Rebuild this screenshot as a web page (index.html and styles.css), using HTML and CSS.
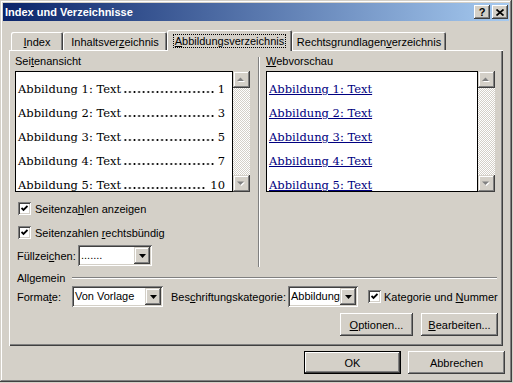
FILE: index.html
```html
<!DOCTYPE html>
<html>
<head>
<title>Index und Verzeichnisse</title>
<meta charset="UTF-8">
<link rel="stylesheet" href="styles.css">
</head>
<body>
<div class="dialog">
  <div class="titlebar">
    <span class="title">Index und Verzeichnisse</span>
    <span class="tbtn">?</span>
    <span class="tbtn close"><svg width="8" height="7" viewBox="0 0 8 7"><path d="M0.5 0.5 L7.5 6.5 M7.5 0.5 L0.5 6.5" stroke="#000" stroke-width="1.7"/></svg></span>
  </div>

  <div class="tabs">
    <div class="tab w-index"><u>I</u>ndex</div>
    <div class="tab w-inhalt">Inhaltsver<u>z</u>eichnis</div>
    <div class="tab active w-abb"><span class="focus"><u>A</u>bbildungsverzeichnis</span></div>
    <div class="tab w-recht">Rechtsgrundlagen<u>v</u>erzeichnis</div>
  </div>

  <div class="panel">
    <div class="top">
      <div class="col left">
        <div class="caption">Sei<u>t</u>enansicht</div>
        <div class="preview">
          <div class="sheet print">
            <div class="entry"><span>Abbildung 1: Text</span><span class="dots"></span><span>1</span></div>
            <div class="entry"><span>Abbildung 2: Text</span><span class="dots"></span><span>3</span></div>
            <div class="entry"><span>Abbildung 3: Text</span><span class="dots"></span><span>5</span></div>
            <div class="entry"><span>Abbildung 4: Text</span><span class="dots"></span><span>7</span></div>
            <div class="entry"><span>Abbildung 5: Text</span><span class="dots"></span><span>10</span></div>
          </div>
          <div class="scroll">
            <div class="sbtn"><svg width="9" height="6" viewBox="0 0 9 6"><polygon points="1,5 8,5 4.5,1.5" fill="#fff"/><polygon points="0,4 7,4 3.5,0.5" fill="#808080"/></svg></div>
            <div class="sbtn"><svg width="9" height="6" viewBox="0 0 9 6"><polygon points="1,1.5 8,1.5 4.5,5" fill="#fff"/><polygon points="0,0.5 7,0.5 3.5,4" fill="#808080"/></svg></div>
          </div>
        </div>
        <div class="check first">
          <span class="box"><svg width="7" height="7" viewBox="0 0 7 7"><polyline points="0.5,3 2.5,5 6.5,1" fill="none" stroke="#000" stroke-width="1.8"/></svg></span>
          <span>Seitenza<u>h</u>len anzeigen</span>
        </div>
        <div class="check second">
          <span class="box"><svg width="7" height="7" viewBox="0 0 7 7"><polyline points="0.5,3 2.5,5 6.5,1" fill="none" stroke="#000" stroke-width="1.8"/></svg></span>
          <span>Seitenzahlen <u>r</u>echtsbündig</span>
        </div>
        <div class="fill-row">
          <span class="lbl-fill">Füllzei<u>c</u>hen:</span>
          <div class="combo w-fill">
            <span class="combo-text">.......</span>
            <span class="combo-btn"><svg width="7" height="4" viewBox="0 0 7 4"><polygon points="0,0 7,0 3.5,4" fill="#000"/></svg></span>
          </div>
        </div>
      </div>

      <div class="divider"></div>

      <div class="col right">
        <div class="caption"><u>W</u>ebvorschau</div>
        <div class="preview">
          <div class="sheet web">
            <div class="entry"><a>Abbildung 1: Text</a></div>
            <div class="entry"><a>Abbildung 2: Text</a></div>
            <div class="entry"><a>Abbildung 3: Text</a></div>
            <div class="entry"><a>Abbildung 4: Text</a></div>
            <div class="entry"><a>Abbildung 5: Text</a></div>
          </div>
          <div class="scroll">
            <div class="sbtn"><svg width="9" height="6" viewBox="0 0 9 6"><polygon points="1,5 8,5 4.5,1.5" fill="#fff"/><polygon points="0,4 7,4 3.5,0.5" fill="#808080"/></svg></div>
            <div class="sbtn"><svg width="9" height="6" viewBox="0 0 9 6"><polygon points="1,1.5 8,1.5 4.5,5" fill="#fff"/><polygon points="0,0.5 7,0.5 3.5,4" fill="#808080"/></svg></div>
          </div>
        </div>
      </div>
    </div>

    <div class="group"><span>Allgemein</span><span class="group-line"></span></div>

    <div class="formats">
      <span class="lbl-format">Forma<u>t</u>e:</span>
      <div class="combo w-format">
        <span class="combo-text">Von Vorlage</span>
        <span class="combo-btn"><svg width="7" height="4" viewBox="0 0 7 4"><polygon points="0,0 7,0 3.5,4" fill="#000"/></svg></span>
      </div>
      <span class="lbl-cat">Bes<u>c</u>hriftungskategorie:</span>
      <div class="combo w-cat">
        <span class="combo-text">Abbildung</span>
        <span class="combo-btn"><svg width="7" height="4" viewBox="0 0 7 4"><polygon points="0,0 7,0 3.5,4" fill="#000"/></svg></span>
      </div>
      <span class="box cat-box"><svg width="7" height="7" viewBox="0 0 7 7"><polyline points="0.5,3 2.5,5 6.5,1" fill="none" stroke="#000" stroke-width="1.8"/></svg></span>
      <span class="cat-text">Kategorie und <u>N</u>ummer</span>
    </div>

    <div class="actions">
      <div class="btn w-opt"><u>O</u>ptionen...</div>
      <div class="btn w-edit"><u>B</u>earbeiten...</div>
    </div>
  </div>

  <div class="footer">
    <div class="btn default w-ok">OK</div>
    <div class="btn w-ok">Abbrechen</div>
  </div>
</div>
</body>
</html>
```

FILE: styles.css
```css
body {
  margin: 0;
  background-color: #d4d0c8;
  font-family: "Liberation Sans", Arial, sans-serif;
  font-size: 11px;
  color: #000;
}
u {
  text-underline-offset: 1px;
}

/* Fensterrahmen */
.dialog {
  width: 512px;
  height: 382px;
  box-sizing: border-box;
  padding: 3px;
  background-color: #d4d0c8;
  box-shadow: inset -1px -1px #404040, inset 1px 1px #d4d0c8, inset -2px -2px #808080, inset 2px 2px #fff;
}
.titlebar {
  height: 18px;
  display: flex;
  align-items: center;
  padding: 0 1px 0 2px;
  background: linear-gradient(to right, #0a246a, #a6caf0);
}
.title {
  flex: 1;
  color: #fff;
  font-weight: bold;
  font-size: 11px;
}
.tbtn {
  width: 16px;
  height: 14px;
  box-sizing: border-box;
  display: flex;
  align-items: center;
  justify-content: center;
  background-color: #d4d0c8;
  font-weight: bold;
  font-size: 11px;
  box-shadow: inset -1px -1px #404040, inset 1px 1px #fff, inset -2px -2px #808080;
}
.tbtn.close {
  margin-left: 2px;
}

/* Registerkarten */
.tabs {
  display: flex;
  align-items: flex-end;
  height: 20px;
  margin: 9px 0 0 6px;
  padding-left: 2px;
}
.tab {
  height: 18px;
  box-sizing: border-box;
  display: flex;
  align-items: center;
  justify-content: center;
  padding-top: 1px;
  border-radius: 2px 2px 0 0;
  box-shadow: inset 1px 1px #fff, inset -1px 0 #404040, inset -2px 0 #808080;
}
.tab.active {
  height: 21px;
  margin-bottom: -1px;
  padding-top: 0;
  position: relative;
  z-index: 1;
  background-color: #d4d0c8;
}
.focus {
  outline: 1px dotted #000;
  padding: 0 1px;
}
.w-index { width: 52px; }
.w-inhalt { width: 104px; }
.w-abb { width: 125px; }
.w-recht { width: 154px; }

.panel {
  width: 494px;
  height: 296px;
  box-sizing: border-box;
  margin-left: 6px;
  padding: 5px 5px 0 6px;
  box-shadow: inset 1px 1px #fff, inset -1px -1px #404040, inset -2px -2px #808080;
}
.top {
  display: flex;
  height: 212px;
}
.col.left { width: 235px; }
.col.right { width: 230px; }
.divider {
  width: 0;
  margin: 2px 6px 0 8px;
  border-left: 1px solid #808080;
  border-right: 1px solid #fff;
}
.caption {
  height: 16px;
  line-height: 13px;
}

/* Vorschaufelder */
.preview {
  display: flex;
  height: 121px;
}
.sheet {
  box-sizing: border-box;
  border: 1px solid #000;
  background-color: #fff;
  overflow: hidden;
  padding-top: 5px;
  font-family: "DejaVu Serif", Georgia, serif;
  font-size: 11.5px;
}
.sheet.print {
  width: 218px;
  padding-left: 2px;
  padding-right: 7px;
}
.sheet.web {
  width: 212px;
  padding-left: 2px;
}
.entry {
  display: flex;
  align-items: baseline;
  height: 24px;
  line-height: 24px;
  white-space: nowrap;
}
.dots {
  flex: 1;
  height: 2px;
  margin: 0 4px 0 2px;
  background-image: radial-gradient(circle, #000 0.8px, transparent 1.2px);
  background-size: 4.6px 2px;
  background-position: 0 0;
}
.web a {
  color: #000080;
  text-decoration: underline;
}
.scroll {
  width: 17px;
  display: flex;
  flex-direction: column;
  justify-content: space-between;
  background-image: repeating-conic-gradient(#fff 0 25%, #d4d0c8 0 50%);
  background-size: 2px 2px;
}
.sbtn {
  height: 17px;
  display: flex;
  align-items: center;
  justify-content: center;
  background-color: #d4d0c8;
  box-shadow: inset -1px -1px #404040, inset 1px 1px #d4d0c8, inset -2px -2px #808080, inset 2px 2px #fff;
}

/* Kontrollkästchen */
.check {
  display: flex;
  align-items: center;
  height: 13px;
  margin-left: 3px;
}
.check.first { margin-top: 10px; }
.check.second { margin-top: 11px; }
.box {
  width: 13px;
  height: 13px;
  box-sizing: border-box;
  display: inline-flex;
  align-items: center;
  justify-content: center;
  flex-shrink: 0;
  background-color: #fff;
  box-shadow: inset 1px 1px #808080, inset -1px -1px #fff, inset 2px 2px #404040, inset -2px -2px #d4d0c8;
}
.check .box {
  margin-right: 4px;
}

/* Auswahllisten */
.fill-row {
  display: flex;
  align-items: center;
  margin: 6px 0 0 2px;
}
.lbl-fill { width: 61px; }
.combo {
  height: 21px;
  box-sizing: border-box;
  display: flex;
  padding: 2px;
  background-color: #fff;
  box-shadow: inset 1px 1px #808080, inset -1px -1px #fff, inset 2px 2px #404040, inset -2px -2px #d4d0c8;
}
.combo-text {
  flex: 1;
  line-height: 17px;
  padding-left: 1px;
  white-space: nowrap;
  overflow: hidden;
}
.combo-btn {
  width: 16px;
  height: 17px;
  display: flex;
  align-items: center;
  justify-content: center;
  background-color: #d4d0c8;
  box-shadow: inset -1px -1px #404040, inset 1px 1px #d4d0c8, inset -2px -2px #808080, inset 2px 2px #fff;
}
.w-fill { width: 74px; }
.w-format { width: 91px; }
.w-cat { width: 70px; }

/* Allgemein */
.group {
  display: flex;
  align-items: center;
  height: 13px;
  margin: 4px 1px 0 2px;
}
.group-line {
  flex: 1;
  margin-left: 7px;
  border-top: 1px solid #808080;
  border-bottom: 1px solid #fff;
}
.formats {
  display: flex;
  align-items: center;
  margin: 2px 0 0 2px;
}
.lbl-format { width: 55px; }
.lbl-cat {
  width: 117px;
  margin-left: 8px;
}
.cat-box { margin-left: 10px; }
.cat-text { margin-left: 3px; }

/* Schaltflächen */
.actions {
  display: flex;
  justify-content: flex-end;
  gap: 8px;
  margin-top: 6px;
}
.btn {
  height: 23px;
  box-sizing: border-box;
  display: flex;
  align-items: center;
  justify-content: center;
  background-color: #d4d0c8;
  box-shadow: inset -1px -1px #404040, inset 1px 1px #fff, inset -2px -2px #808080, inset 2px 2px #d4d0c8;
}
.btn.default {
  box-shadow: inset 0 0 0 1px #000, inset -2px -2px #404040, inset 2px 2px #fff, inset -3px -3px #808080;
}
.w-opt { width: 73px; }
.w-edit { width: 77px; }
.w-ok { width: 97px; }
.footer {
  display: flex;
  justify-content: flex-end;
  gap: 7px;
  margin-top: 5px;
  padding-right: 4px;
}
```
